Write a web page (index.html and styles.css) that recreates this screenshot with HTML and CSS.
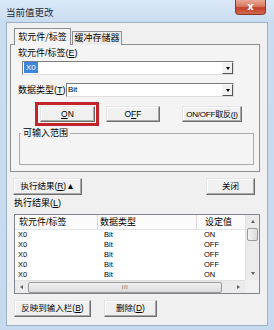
FILE: index.html
```html
<!DOCTYPE html>
<html>
<head>
<meta charset="utf-8">
<link rel="stylesheet" href="styles.css">
</head>
<body>
<div class="window">
  <div class="titlebar">
    <span class="title">当前值更改</span>
    <span class="close">x</span>
  </div>
  <div class="client">
    <div class="tabs">
      <div class="tab active">软元件/标签</div>
      <div class="tab">缓冲存储器</div>
    </div>
    <div class="panel">
      <div class="plabel">软元件/标签(<u>E</u>)</div>
      <div class="combo combo1"><span class="val"><span class="sel">X0</span></span><span class="drop"><i class="tri"></i></span></div>
      <div class="row2">
        <span class="rlabel">数据类型(<u>T</u>)</span>
        <div class="combo combo2"><span class="val">Bit</span><span class="drop"><i class="tri"></i></span></div>
      </div>
      <div class="btnrow">
        <div class="redbox"><div class="btn b-on"><span><u>O</u>N</span></div></div>
        <div class="btn b-off"><span>O<u>F</u>F</span></div>
        <div class="btn b-inv"><span>ON/OFF取反(<u>I</u>)</span></div>
      </div>
      <fieldset class="group"><legend>可输入范围</legend></fieldset>
    </div>
    <div class="actions">
      <div class="btn b-res"><span>执行结果(<u>R</u>)▲</span></div>
      <div class="btn b-close"><span>关闭</span></div>
    </div>
    <div class="llabel">执行结果(<u>L</u>)</div>
    <div class="list">
      <div class="lmain">
        <div class="lrow lhead"><span>软元件/标签</span><span>数据类型</span><span>设定值</span></div>
        <div class="lrow"><span>X0</span><span>Bit</span><span>ON</span></div>
        <div class="lrow"><span>X0</span><span>Bit</span><span>OFF</span></div>
        <div class="lrow"><span>X0</span><span>Bit</span><span>OFF</span></div>
        <div class="lrow"><span>X0</span><span>Bit</span><span>OFF</span></div>
        <div class="lrow"><span>X0</span><span>Bit</span><span>ON</span></div>
      </div>
      <div class="vscroll">
        <span class="arr up"></span>
        <span class="vthumb"></span>
        <span class="vtrack"></span>
        <span class="arr down"></span>
      </div>
      <div class="hscroll">
        <span class="arr left"></span>
        <span class="hthumb"><i>III</i></span>
        <span class="htrack"></span>
        <span class="arr right"></span>
      </div>
      <div class="corner"></div>
    </div>
    <div class="bottom">
      <div class="btn b-apply"><span>反映到输入栏(<u>B</u>)</span></div>
      <div class="btn b-del"><span>删除(<u>D</u>)</span></div>
    </div>
  </div>
</div>
</body>
</html>
```

FILE: styles.css
```css
* { box-sizing: border-box; }
html, body { margin: 0; padding: 0; }
body {
  width: 274px; height: 330px; overflow: hidden;
  font-family: "Liberation Sans", "Noto Sans CJK SC", sans-serif;
  font-size: 9px; color: #000; background: #fff;
}
u { text-decoration: underline; text-underline-offset: 1px; }

.window {
  width: 274px; height: 330px;
  background: linear-gradient(180deg, #dce9f7 0px, #c9dcf0 22px, #c6d9ee 100%);
  padding: 0 6px 4px 6px;
  display: flex; flex-direction: column;
}
.titlebar {
  height: 22px; flex: none;
  display: flex; justify-content: space-between; align-items: flex-start;
}
.title {
  margin-top: 6px; line-height: 12px; font-size: 9.5px; color: #1b2735;
  font-family: "Noto Sans CJK SC", sans-serif;
}
.close {
  width: 31px; height: 15px; margin-right: 2px;
  border: 1px solid #8a3b2f; border-top: none;
  border-radius: 0 0 4px 4px;
  background: linear-gradient(180deg, #e9a795 0%, #d77a63 45%, #c2412a 55%, #d3654c 100%);
  color: #fff; font-weight: bold; font-size: 10px; line-height: 13px;
  text-align: center; font-family: "DejaVu Sans", sans-serif;
}

.client {
  flex: 1; background: #f0f0f0;
  border: 1px solid #9cb0c6;
  display: flex; flex-direction: column;
}

.tabs {
  display: flex; align-items: flex-end;
  margin: 5px 0 -1px 7px; height: 17px;
  position: relative; z-index: 1;
}
.tab {
  height: 14px; line-height: 12px; padding: 0 1px;
  border: 1px solid #8c8e94; border-bottom: none;
  background: #ececec; text-align: center; white-space: nowrap;
  font-family: "Noto Sans CJK SC", sans-serif;
}
.tab.active { height: 17px; width: 57px; background: #f4f4f4; line-height: 15px; }
.tab:not(.active) { width: 50px; margin-left: 1px; }

.panel {
  margin-left: 3px; width: 250px; height: 128px; flex: none;
  border: 1px solid #8c8e94; background: #f4f4f4;
  display: flex; flex-direction: column; align-items: flex-start;
}
.plabel { margin: 3px 0 0 7px; line-height: 11px; }
.combo {
  height: 14px; display: flex; background: #fff;
  border: 1px solid; border-color: #7c7c7c #dedede #dedede #7c7c7c;
}
.combo .val { flex: 1; line-height: 12px; padding-left: 1px; font-size: 8px; }
.combo1 { margin: 2px 0 0 11px; width: 212px; }
.combo2 { width: 168px; }
.sel { background: #3d86e0; color: #fff; padding: 0 2px; display: inline-block; line-height: 11px; }
.drop {
  width: 11px; height: 12px; background: #f0f0f0;
  border: 1px solid; border-color: #f8f8f8 #555 #555 #f8f8f8;
  display: flex; align-items: center; justify-content: center;
}
.tri {
  width: 0; height: 0;
  border-left: 2.5px solid transparent; border-right: 2.5px solid transparent;
  border-top: 3px solid #000;
}
.row2 { display: flex; align-items: center; margin: 8px 0 0 7px; height: 14px; }
.rlabel { width: 48px; line-height: 11px; }

.btn {
  height: 17px; background: #f0f0f0;
  border: 1px solid; border-color: #e4e4e4 #6e6e6e #6e6e6e #e4e4e4;
  box-shadow: inset -1px -1px #a8a8a8, inset 1px 1px #fff;
  display: flex; align-items: center; justify-content: center;
  line-height: 11px; white-space: nowrap; font-size: 8.5px;
}
.btnrow { display: flex; align-items: center; margin: 5px 0 0 24px; height: 24px; }
.redbox {
  width: 64px; height: 24px; border: 3px solid #c3242b;
  padding: 1px 1px 1px 2px; display: flex; align-items: center;
}
.b-on { width: 56px; height: 16px; }
.b-off { width: 54px; height: 16px; margin-left: 7px; }
.b-inv { width: 60px; height: 16px; margin-left: 22px; font-size: 8px; letter-spacing: -0.2px; }

.group {
  margin: 2px 0 0 8px; padding: 0; width: 235px; height: 37px;
  border: 1px solid #a9abb0;
}
.group legend { padding: 0 2px; margin-left: 1px; line-height: 11px; }

.actions {
  display: flex; justify-content: space-between;
  margin: 6px 12px 0 6px;
}
.b-res { width: 69px; }
.b-close { width: 49px; }
.llabel { margin: 3px 0 0 7px; line-height: 11px; }

.list {
  margin: 5px 0 0 7px; width: 246px; height: 80px; flex: none;
  border: 1px solid #7f848d; background: #fff;
  display: grid; grid-template-columns: 1fr 14px; grid-template-rows: 1fr 13px;
}
.lmain { overflow: hidden; }
.lrow {
  display: grid; grid-template-columns: 83px 99px 1fr;
  height: 10px; line-height: 10px; font-size: 7.5px;
}
.lrow span { padding-left: 3px; white-space: nowrap; }
.lrow span:nth-child(2) { padding-left: 6px; }
.lrow span:nth-child(3) { padding-left: 7px; }
.lhead {
  height: 15px; line-height: 14px; font-size: 9px;
  border-bottom: 1px solid #e2e4e8; background: #fbfbfb;
}
.lhead span { border-right: 1px solid #d7d9dd; padding-left: 4px !important; }
.lhead span:nth-child(2) { padding-left: 2px !important; }
.lhead span:last-child { border-right: none; padding-left: 8px !important; }

.vscroll {
  background: #ebebeb; border-left: 1px solid #e0e0e0;
  display: flex; flex-direction: column; align-items: center;
}
.hscroll {
  background: #ebebeb; border-top: 1px solid #e0e0e0;
  display: flex; align-items: center;
}
.corner { background: #f0f0f0; }
.arr { width: 13px; height: 13px; display: flex; align-items: center; justify-content: center; flex: none; }
.arr::before { content: ""; width: 0; height: 0; }
.up::before { border-left: 2.5px solid transparent; border-right: 2.5px solid transparent; border-bottom: 3px solid #606060; }
.down::before { border-left: 2.5px solid transparent; border-right: 2.5px solid transparent; border-top: 3px solid #606060; }
.left::before { border-top: 2.5px solid transparent; border-bottom: 2.5px solid transparent; border-right: 3px solid #606060; }
.right::before { border-top: 2.5px solid transparent; border-bottom: 2.5px solid transparent; border-left: 3px solid #606060; }
.vthumb {
  width: 11px; height: 13px; flex: none;
  border: 1px solid #9a9a9a; border-radius: 2px;
  background: linear-gradient(90deg, #f2f2f2, #dcdcdc);
}
.vtrack { flex: 1; }
.hthumb {
  width: 194px; height: 11px; flex: none;
  border: 1px solid #9a9a9a; border-radius: 2px;
  background: linear-gradient(180deg, #f2f2f2, #dadada);
  display: flex; align-items: center; justify-content: center;
}
.hthumb i { font-style: normal; font-size: 6px; color: #6a6a6a; letter-spacing: 0.5px; line-height: 8px; }
.htrack { flex: 1; }

.bottom { display: flex; margin: 6px 0 0 7px; }
.b-apply { width: 77px; }
.b-del { width: 53px; margin-left: 13px; }
```
